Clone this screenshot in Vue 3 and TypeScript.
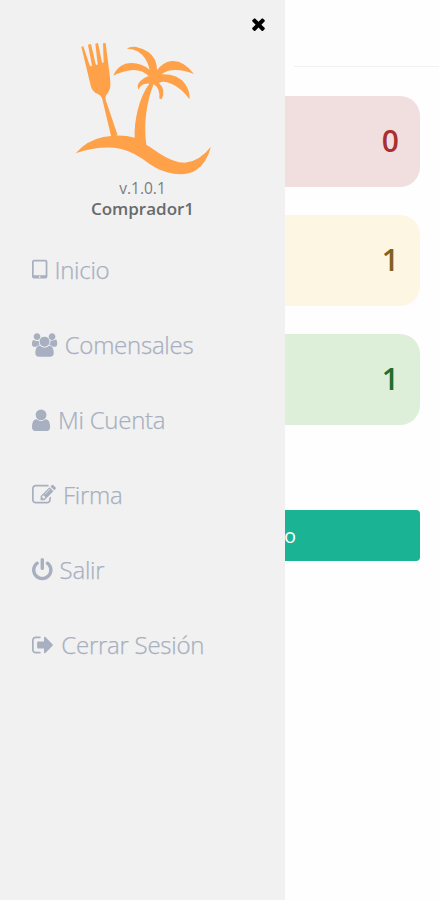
<script setup lang="ts">
interface MenuItem {
  label: string
  viewBox: string
  width: number
  path: string
}

interface Counter {
  value: number
  tone: 'danger' | 'warning' | 'success'
}

const menu: MenuItem[] = [
  {
    label: 'Inicio',
    viewBox: '320 0 1152 1792',
    width: 15.4,
    path: 'M960 1408q0-26-19-45t-45-19-45 19-19 45 19 45 45 19 45-19 19-45zm384-160v-960q0-13-9.5-22.5t-22.5-9.5h-832q-13 0-22.5 9.5t-9.5 22.5v960q0 13 9.5 22.5t22.5 9.5h832q13 0 22.5-9.5t9.5-22.5zm128-960v1088q0 66-47 113t-113 47h-832q-66 0-113-47t-47-113v-1088q0-66 47-113t113-47h832q66 0 113 47t47 113z',
  },
  {
    label: 'Comensales',
    viewBox: '64 0 1968 1792',
    width: 25.7,
    path: 'M657 896q-162 5-265 128h-134q-82 0-138-40.5t-56-118.5q0-353 124-353 6 0 43.5 21t97.5 42.5 119 21.5q67 0 133-23-5 37-5 66 0 159 93 294zm1071 637q0 120-73 189.5t-194 69.5h-874q-121 0-194-69.5t-73-189.5q0-53 3.5-103.5t14-109 26.5-108.5 43-97.5 62-81 85.5-53.5 111.5-20q10 0 43 21.5t73 48 107 48 135 21.5 135-21.5 107-48 73-48 43-21.5q61 0 111.5 20t85.5 53.5 62 81 43 97.5 26.5 108.5 14 109 3.5 103.5zm-1024-1277q0 106-75 181t-181 75-181-75-75-181 75-181 181-75 181 75 75 181zm704 384q0 159-112.5 271.5t-271.5 112.5-271.5-112.5-112.5-271.5 112.5-271.5 271.5-112.5 271.5 112.5 112.5 271.5zm576 225q0 78-56 118.5t-138 40.5h-134q-103-123-265-128 93-135 93-294 0-29-5-66 66 23 133 23 59 0 119-21.5t97.5-42.5 43.5-21q124 0 124 353zm-128-609q0 106-75 181t-181 75-181-75-75-181 75-181 181-75 181 75 75 181z',
  },
  {
    label: 'Mi Cuenta',
    viewBox: '256 30 1328 1700',
    width: 19,
    path: 'M1536 1399q0 109-62.5 187t-150.5 78h-854q-88 0-150.5-78t-62.5-187q0-85 8.5-160.5t31.5-152 58.5-131 94-89 134.5-34.5q131 128 313 128t313-128q76 0 134.5 34.5t94 89 58.5 131 31.5 152 8.5 160.5zm-256-887q0 159-112.5 271.5t-271.5 112.5-271.5-112.5-112.5-271.5 112.5-271.5 271.5-112.5 271.5 112.5 112.5 271.5z',
  },
  {
    label: 'Firma',
    viewBox: '0 0 1792 1792',
    width: 24,
    path: 'M888 1184l116-116-152-152-116 116v56h96v96h56zm440-720q-16-16-33 1l-350 350q-17 17-1 33t33-1l350-350q17-17 1-33zm80 594v190q0 119-84.5 203.5t-203.5 84.5h-832q-119 0-203.5-84.5t-84.5-203.5v-832q0-119 84.5-203.5t203.5-84.5h832q63 0 117 25 15 7 18 23 3 17-9 29l-49 49q-14 14-32 8-23-6-45-6h-832q-66 0-113 47t-47 113v832q0 66 47 113t113 47h832q66 0 113-47t47-113v-126q0-13 9-22l64-64q15-15 35-7t20 29zm-96-738l288 288-672 672h-288v-288zm444 132l-92 92-288-288 92-92q28-28 68-28t68 28l152 152q28 28 28 68t-28 68z',
  },
  {
    label: 'Salir',
    viewBox: '128 0 1536 1792',
    width: 20.6,
    path: 'M1664 896q0 156-61 298t-164 245-245 164-298 61-298-61-245-164-164-245-61-298q0-182 80.5-343t226.5-270q43-32 95.5-25t83.5 50q32 42 24.5 94.5t-49.5 84.5q-98 74-151.5 181t-53.5 228q0 104 40.5 198.5t109.5 163.5 163.5 109.5 198.5 40.5 198.5-40.5 163.5-109.5 109.5-163.5 40.5-198.5q0-121-53.5-228t-151.5-181q-42-32-49.5-84.5t24.5-94.5q31-43 84-50t95 25q146 109 226.5 270t80.5 343zm-640-768v640q0 52-38 90t-90 38-90-38-38-90v-640q0-52 38-90t90-38 90 38 38 90z',
  },
  {
    label: 'Cerrar Sesión',
    viewBox: '64 0 1664 1792',
    width: 22.3,
    path: 'M704 1440q0 4 1 20t.5 26.5-3 23.5-10 19.5-20.5 6.5h-320q-119 0-203.5-84.5t-84.5-203.5v-704q0-119 84.5-203.5t203.5-84.5h320q13 0 22.5 9.5t9.5 22.5q0 4 1 20t.5 26.5-3 23.5-10 19.5-20.5 6.5h-320q-66 0-113 47t-47 113v704q0 66 47 113t113 47h312l11.5 1 11.5 3 8 5.5 7 9 2 13.5zm928-544q0 26-19 45l-544 544q-19 19-45 19t-45-19-19-45v-288h-448q-26 0-45-19t-19-45v-384q0-26 19-45t45-19h448v-288q0-26 19-45t45-19 45 19l544 544q19 19 19 45z',
  },
]

const counters: Counter[] = [
  { value: 0, tone: 'danger' },
  { value: 1, tone: 'warning' },
  { value: 1, tone: 'success' },
]
</script>

<template>
  <div class="screen">
    <aside class="drawer">
      <div class="drawer-top">
        <button class="close" type="button" aria-label="Cerrar">
          <svg viewBox="302 238 1188 1316" width="13" height="14">
            <path d="M1490 1322q0 40-28 68l-136 136q-28 28-68 28t-68-28l-294-294-294 294q-28 28-68 28t-68-28l-136-136q-28-28-28-68t28-68l294-294-294-294q-28-28-28-68t28-68l136-136q28-28 68-28t68 28l294 294 294-294q28-28 68-28t68 28l136 136q28 28 28 68t-28 68l-294 294 294 294q28 28 28 68z" />
          </svg>
        </button>
      </div>
      <header class="profile">
        <svg class="logo" viewBox="0 0 468 435" width="156" height="145">
          <path d="M46 38L52 37L71 94Q75 99 78 95L66 32L75 30L89 90Q92 95 95 91L88 29L96 27L108 85Q111 89 113 84L111 28L119 27L131 122Q134 143 133 157Q131 173 120 184Q117 190 120 200L155 304L136 310L110 200Q108 187 96 180Q80 174 75 158Z" />
          <path d="M29 358Q62 319 112 309Q165 299 206 311C204 260 219 190 250 149Q226 147 217 167Q211 151 224 140Q236 130 248 126Q224 102 185 110Q158 116 142 125Q152 98 178 89Q218 80 251 107Q242 69 215 52Q203 45 182 44Q193 36 211 39Q253 49 267 77Q273 91 273 109Q290 85 316 81Q353 78 384 120Q354 108 328 108Q302 108 287 121Q335 120 357 149Q372 170 371 196Q345 161 316 149Q291 138 279 147Q301 166 287 196Q282 195 280 193Q283 164 263 150C243 200 232 265 241 332Q258 342 277 356Q322 386 357 386Q399 383 435 338Q422 387 391 408Q355 430 303 415Q270 406 229 374Q187 345 144 341Q84 338 29 358Z" />
        </svg>
        <span class="version">v.1.0.1</span>
        <strong class="user">Comprador1</strong>
      </header>
      <nav class="menu">
        <a v-for="item in menu" :key="item.label" class="menu-item">
          <svg :viewBox="item.viewBox" :width="item.width" height="24" preserveAspectRatio="xMinYMid meet">
            <path :d="item.path" />
          </svg>
          <span>{{ item.label }}</span>
        </a>
      </nav>
    </aside>
    <main class="content">
      <div class="topbar"></div>
      <section class="counters">
        <div v-for="(c, i) in counters" :key="i" class="counter" :class="c.tone">{{ c.value }}</div>
      </section>
      <button class="action" type="button">o</button>
    </main>
  </div>
</template>

<style>
body {
  margin: 0;
  background: #fefefe;
}
</style>

<style scoped>
.screen {
  display: flex;
  height: 900px;
  overflow: hidden;
  font-family: 'Open Sans', 'Noto Sans', sans-serif;
}
.drawer {
  flex: 0 0 285px;
  box-sizing: border-box;
  background: #f1f1f1;
}
.drawer-top {
  display: flex;
  justify-content: flex-end;
  height: 34px;
  padding: 17px 20px 0 0;
  box-sizing: border-box;
}
.close {
  display: block;
  height: 14px;
  padding: 0;
  border: 0;
  background: none;
}
.close svg {
  display: block;
}
.profile {
  display: flex;
  flex-direction: column;
  align-items: center;
  color: #676a6c;
}
.logo {
  display: block;
  margin-left: 3px;
  fill: #ffa149;
}
.version {
  font-size: 15.5px;
  line-height: 18px;
  color: #7a7c7e;
}
.user {
  font-size: 17px;
  line-height: 24px;
  font-weight: 600;
}
.menu {
  display: flex;
  flex-direction: column;
  margin-top: 11px;
  padding-left: 32px;
}
.menu-item {
  display: flex;
  align-items: center;
  gap: 7px;
  height: 75px;
  color: #a7afc0;
  font-size: 24px;
  font-weight: 300;
  letter-spacing: -0.25px;
  white-space: nowrap;
}
.menu-item svg {
  display: block;
  flex: none;
  overflow: visible;
  fill: currentColor;
}
.menu-item span {
  -webkit-text-stroke: 0.25px currentColor;
}
.content {
  flex: 1;
  min-width: 0;
  background: #fefefe;
}
.topbar {
  height: 67px;
  box-sizing: border-box;
  margin-left: 9px;
  border-bottom: 1px solid #f1f1f1;
}
.counters {
  display: flex;
  flex-direction: column;
  gap: 28px;
  padding: 28.5px 19px 0 0;
}
.counter {
  display: flex;
  align-items: center;
  justify-content: flex-end;
  box-sizing: border-box;
  height: 91px;
  padding: 0 21px 1px 0;
  border-radius: 0 20px 20px 0;
  font-size: 30px;
  font-weight: 600;
}
.danger {
  background: #f1dfe0;
  color: #a9302f;
}
.warning {
  background: #fcf6e3;
  color: #83601f;
}
.success {
  background: #deefd9;
  color: #236c2b;
}
.action {
  display: block;
  width: 135px;
  height: 51px;
  margin-top: 85.5px;
  padding: 0;
  border: 0;
  border-radius: 0 4px 4px 0;
  background: #1ab394;
  color: #fff;
  font-family: inherit;
  font-size: 20px;
  text-align: left;
  text-indent: -1px;
}
</style>
